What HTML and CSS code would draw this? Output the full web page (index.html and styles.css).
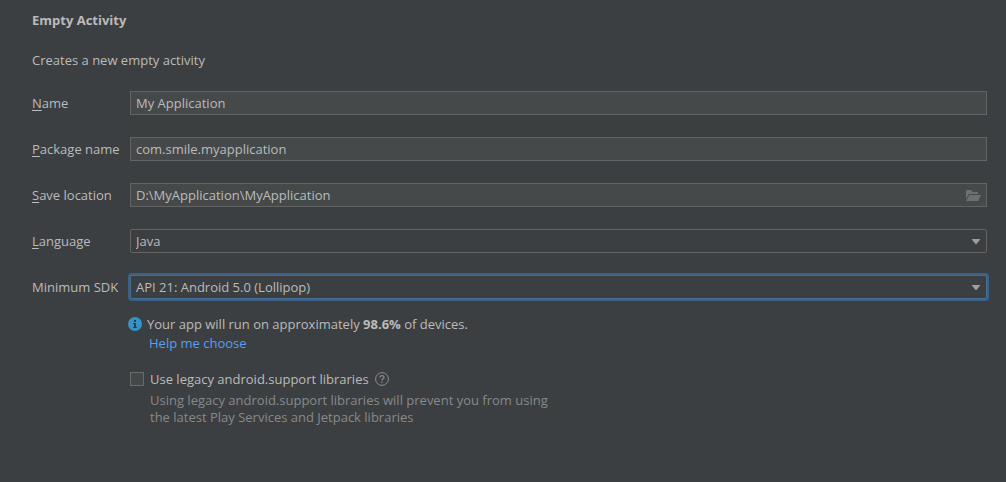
FILE: index.html
```html
<!DOCTYPE html>
<html lang="en">
<head>
<meta charset="utf-8">
<title>Empty Activity</title>
<link rel="stylesheet" href="styles.css">
</head>
<body>
<main class="page">
  <h1 class="title">Empty Activity</h1>
  <p class="intro">Creates a new empty activity</p>
  <form class="form">
    <label class="label" for="name"><u>N</u>ame</label>
    <input class="field" id="name" type="text" value="My Application">

    <label class="label" for="package"><u>P</u>ackage name</label>
    <input class="field" id="package" type="text" value="com.smile.myapplication">

    <label class="label" for="location"><u>S</u>ave location</label>
    <div class="control">
      <input class="field" id="location" type="text" value="D:\MyApplication\MyApplication">
      <button class="browse" type="button" aria-label="Browse">
        <svg width="15" height="11" viewBox="0 0 15 11"><path d="M0 0h5l1.500 2H12v2H3L0 9z"/><path d="M3.500 5H15l-3 6H0z"/></svg>
      </button>
    </div>

    <label class="label" for="language"><u>L</u>anguage</label>
    <div class="control">
      <select class="field select" id="language"><option>Java</option></select>
      <svg class="arrow" width="10" height="6" viewBox="0 0 10 6"><path d="M0.500 0h9L5 5.500z"/></svg>
    </div>

    <label class="label" for="sdk">Minimum SDK</label>
    <div class="control">
      <select class="field select active" id="sdk"><option>API 21: Android 5.0 (Lollipop)</option></select>
      <svg class="arrow" width="10" height="6" viewBox="0 0 10 6"><path d="M0.500 0h9L5 5.500z"/></svg>
    </div>
  </form>

  <section class="details">
    <div class="info">
      <svg width="14" height="14" viewBox="0 0 14 14"><circle cx="7" cy="7" r="7" fill="#3592c4"/><path d="M6 3h2v2H6zM5 6h3v4h1v1H5v-1h1V7H5z" fill="#2f3d46"/></svg>
      <span>Your app will run on approximately <b>98.6%</b> of devices.</span>
    </div>
    <a class="link" href="#">Help me choose</a>
    <div class="legacy">
      <input class="check" id="legacy" type="checkbox">
      <label for="legacy">Use legacy android.support libraries</label>
      <svg class="help" width="14" height="14" viewBox="0 0 14 14" fill="none" stroke="#8b8e90"><circle cx="7" cy="7" r="6.4"/><path d="M5 5.600C5 3 9 3 9 5.400c0 1.400-2 1.400-2 3M7 9.500v1.300" stroke-width="1.3"/></svg>
    </div>
    <p class="note">Using legacy android.support libraries will prevent you from using<br>the latest Play Services and Jetpack libraries</p>
  </section>
</main>
</body>
</html>
```
FILE: styles.css
```css
* { box-sizing: border-box; }
body {
  margin: 0;
  background: #3c3f41;
  color: #bbbbbb;
  font: 13px/18px "Open Sans", "Noto Sans", sans-serif;
}
.page { padding: 11px 19px 24px 32px; }
.title { margin: 0; font-size: 13px; line-height: 18px; }
.intro { margin: 22px 0; }
.form {
  display: grid;
  grid-template-columns: 98px 1fr;
  row-gap: 22px;
  align-items: center;
}
.label { white-space: nowrap; }
.label u { text-underline-offset: 2px; }
.control { position: relative; display: flex; }
.field {
  width: 100%;
  height: 24px;
  margin: 0;
  padding: 0 5px;
  border: 1px solid #646464;
  border-radius: 0;
  background: #45494a;
  color: #bbbbbb;
  font: inherit;
  outline: none;
}
.select {
  appearance: none;
  border-radius: 2px;
  background: #3c3f41;
}
.active {
  border-color: #466d94;
  box-shadow: 0 0 0 2px #3d6185;
}
.browse {
  position: absolute;
  top: 7px;
  right: 6px;
  display: flex;
  padding: 0;
  border: 0;
  background: none;
}
.browse path { fill: #6b7173; }
.arrow {
  position: absolute;
  top: 10px;
  right: 6px;
  fill: #9da0a2;
  pointer-events: none;
}
.details { padding: 16px 0 0 96px; }
.info { display: flex; align-items: center; gap: 5px; }
.link {
  display: block;
  width: fit-content;
  margin: 1px 0 0 21px;
  color: #589df6;
  text-decoration: none;
}
.legacy { display: flex; align-items: center; margin-top: 18px; padding-left: 2px; }
.check {
  appearance: none;
  width: 14px;
  height: 14px;
  margin: 0 6px 0 0;
  border: 1px solid #6b6b6b;
  background: #43494a;
}
.help { margin-left: 6px; }
.note { margin: 4px 0 0 22px; line-height: 17px; color: #87898b; }
```
